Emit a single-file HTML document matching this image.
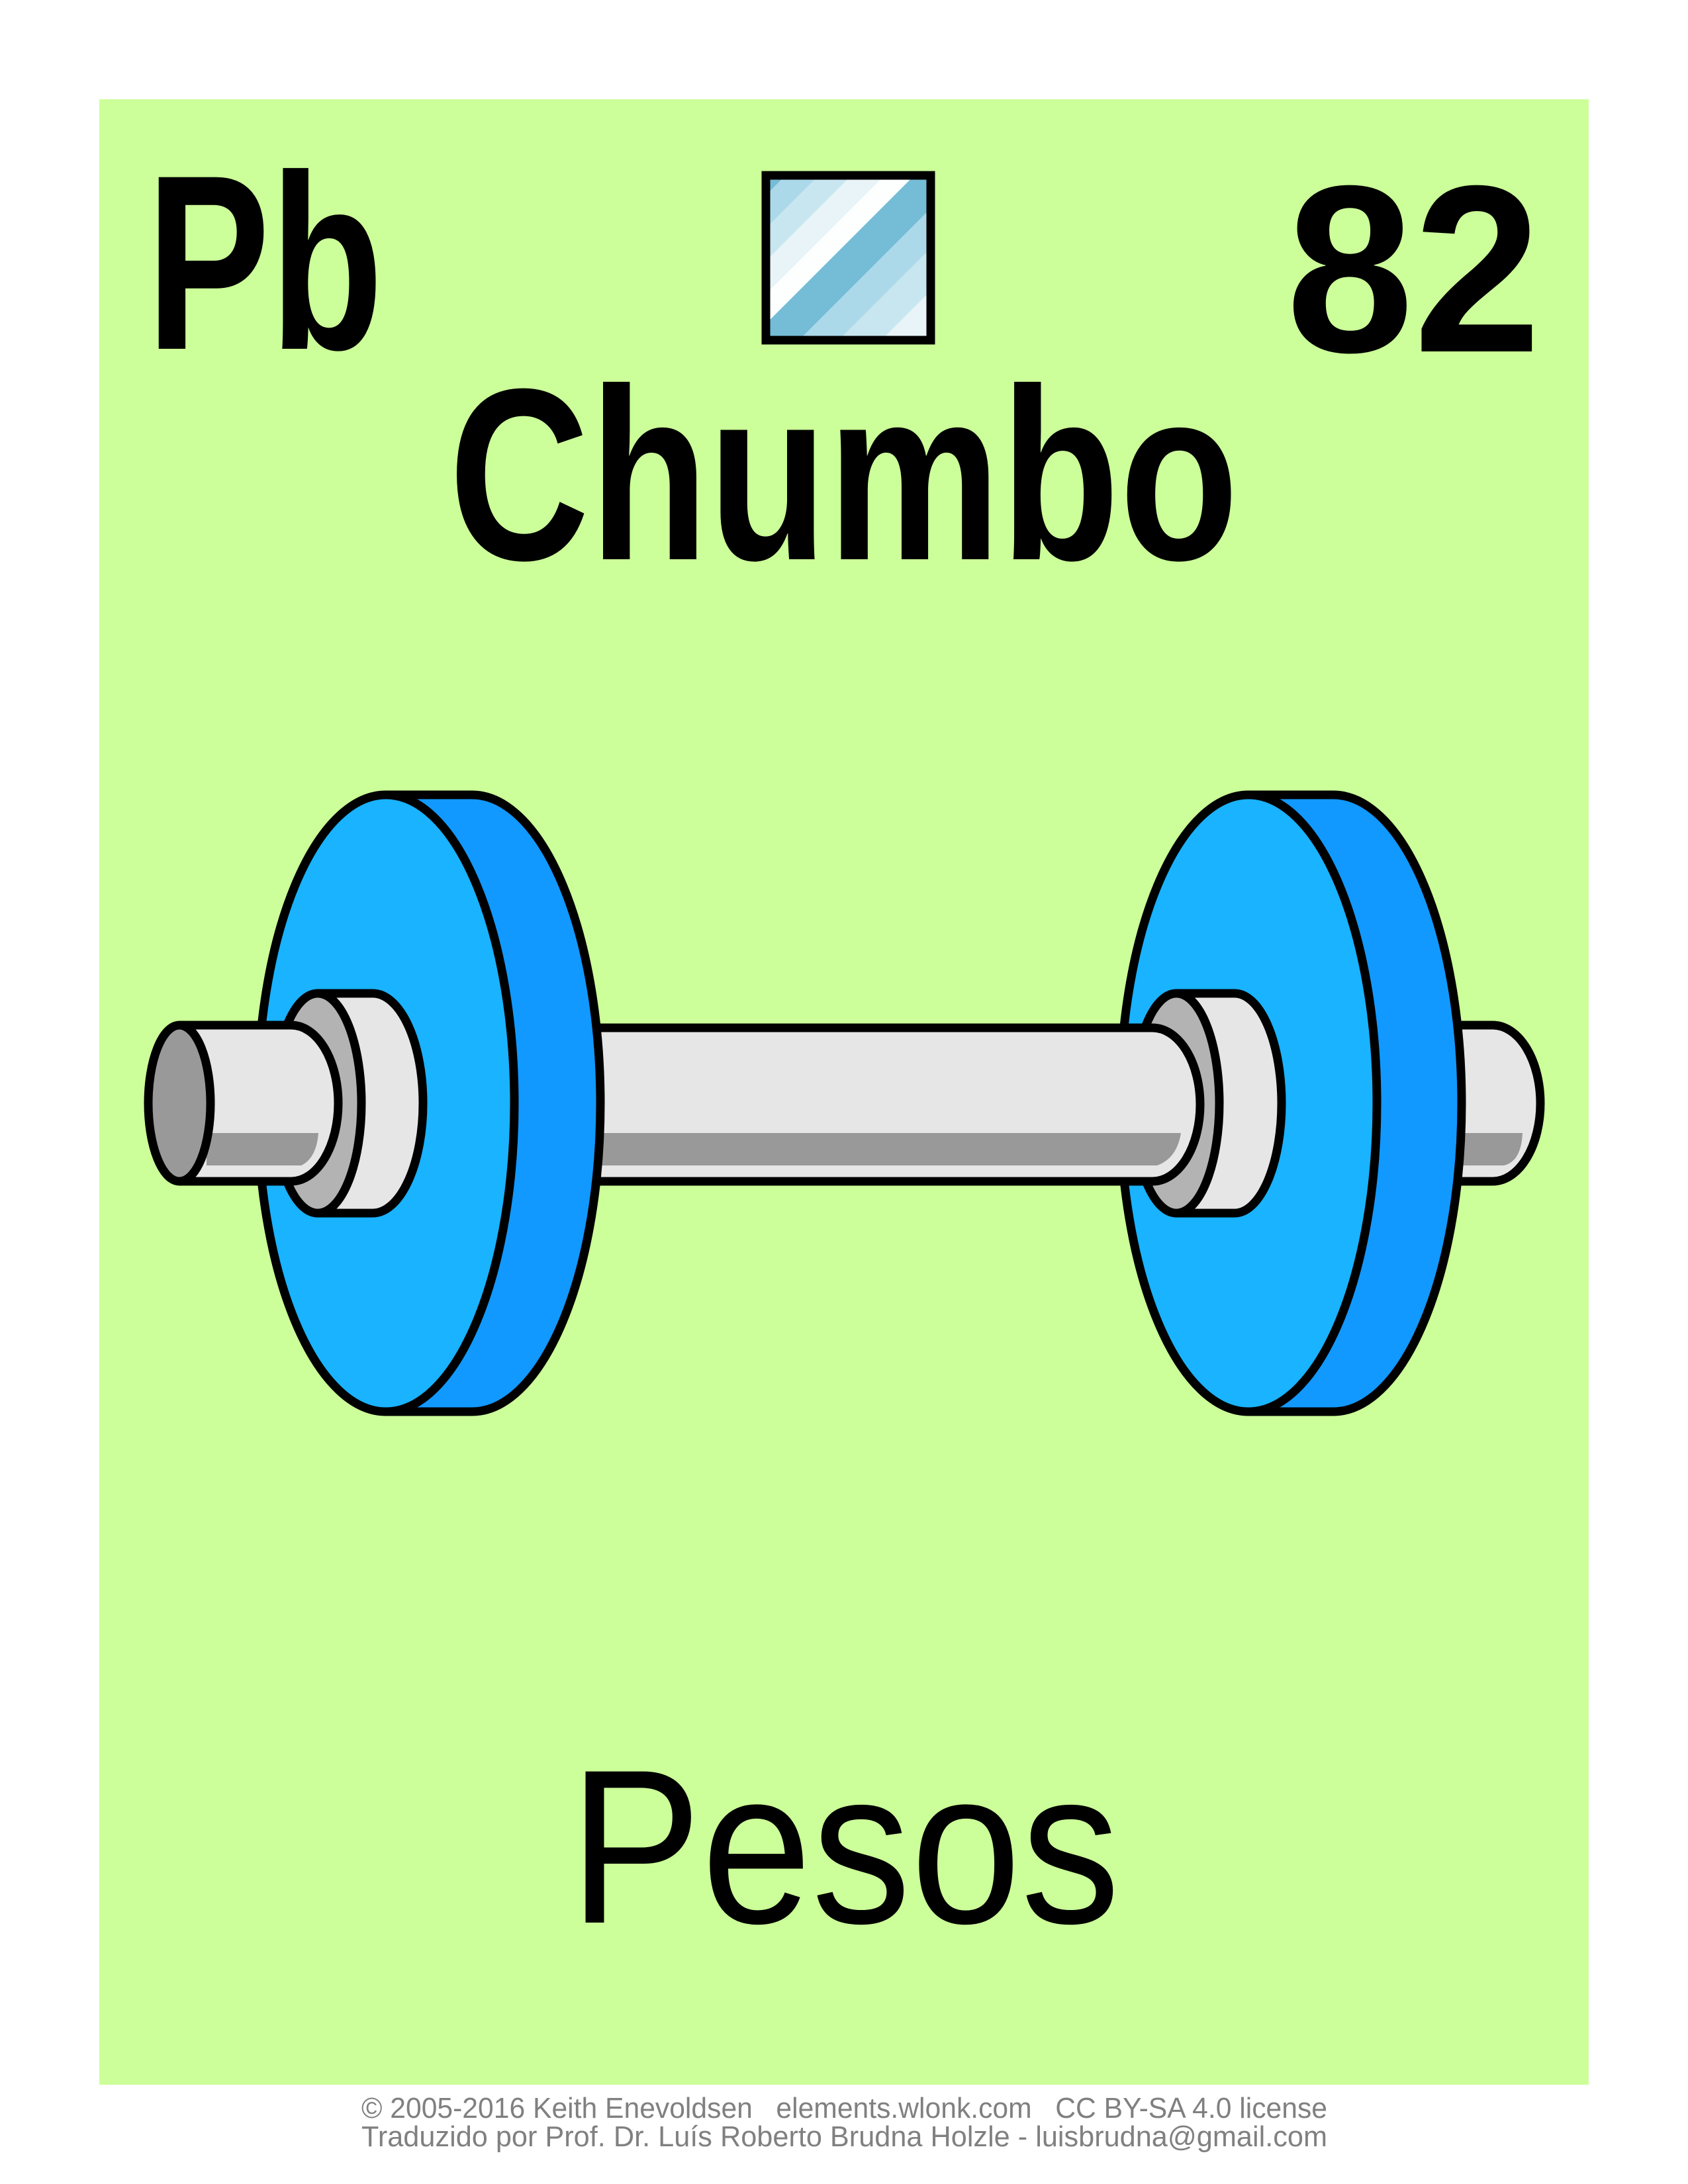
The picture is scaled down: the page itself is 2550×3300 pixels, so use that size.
<!DOCTYPE html>
<html><head><meta charset="utf-8"><style>
html,body{margin:0;padding:0;background:#fff;}
svg{display:block;}
</style></head><body>
<svg width="2550" height="3300" viewBox="0 0 2550 3300" xmlns="http://www.w3.org/2000/svg">
<defs>
<linearGradient id="g" x1="0" y1="0" x2="1" y2="1">
<stop offset="0" stop-color="#75bcd6"/><stop offset="0.06" stop-color="#75bcd6"/>
<stop offset="0.06" stop-color="#acd9ea"/><stop offset="0.16" stop-color="#acd9ea"/>
<stop offset="0.16" stop-color="#c8e6ef"/><stop offset="0.26" stop-color="#c8e6ef"/>
<stop offset="0.26" stop-color="#e8f4f7"/><stop offset="0.36" stop-color="#e8f4f7"/>
<stop offset="0.36" stop-color="#fdfefe"/><stop offset="0.45" stop-color="#fdfefe"/>
<stop offset="0.45" stop-color="#75bcd6"/><stop offset="0.6" stop-color="#75bcd6"/>
<stop offset="0.6" stop-color="#acd9ea"/><stop offset="0.72" stop-color="#acd9ea"/>
<stop offset="0.72" stop-color="#c8e6ef"/><stop offset="0.85" stop-color="#c8e6ef"/>
<stop offset="0.85" stop-color="#e8f4f7"/><stop offset="1" stop-color="#e8f4f7"/>
</linearGradient>
</defs>
<rect x="150" y="150" width="2250" height="3000" fill="#ccff99"/>
<text x="221" y="527" font-family="Liberation Sans, sans-serif" font-weight="bold" font-size="377" textLength="358" lengthAdjust="spacingAndGlyphs">Pb</text>
<text x="1943" y="531" font-family="Liberation Sans, sans-serif" font-weight="bold" font-size="360" textLength="385" lengthAdjust="spacingAndGlyphs">82</text>
<rect x="1157" y="265" width="249" height="249" fill="url(#g)" stroke="#000" stroke-width="13"/>
<text x="678" y="845" font-family="Liberation Sans, sans-serif" font-weight="bold" font-size="370" textLength="1193" lengthAdjust="spacingAndGlyphs">Chumbo</text>
<text x="860" y="2905" font-family="Liberation Sans, sans-serif" font-size="332" textLength="832" lengthAdjust="spacingAndGlyphs">Pesos</text>
<text x="546" y="3200" font-family="Liberation Sans, sans-serif" font-size="44" fill="#808080" textLength="1459" lengthAdjust="spacingAndGlyphs" xml:space="preserve">© 2005-2016 Keith Enevoldsen   elements.wlonk.com   CC BY-SA 4.0 license</text>
<text x="546" y="3243" font-family="Liberation Sans, sans-serif" font-size="44" fill="#808080" textLength="1459" lengthAdjust="spacingAndGlyphs">Traduzido por Prof. Dr. Luís Roberto Brudna Holzle - luisbrudna@gmail.com</text>

<g stroke="#000" stroke-width="13" stroke-linejoin="round">
<!-- main bar full (behind) -->
<path d="M800 1553 H1741 A72 116 0 0 1 1741 1785 H800 Z" fill="#e6e6e6"/>
<path d="M800 1712 H1784 Q1778 1750 1748 1761 H800 Z" fill="#999" stroke="none"/>
<!-- right stub (behind right plate) -->
<path d="M2150 1549 H2255 A72 118 0 0 1 2255 1785 H2150 Z" fill="#e6e6e6"/>
<path d="M2190 1712 H2300 Q2298 1755 2272 1761 H2190 Z" fill="#999" stroke="none"/>
<!-- left plate -->
<ellipse cx="713" cy="1667" rx="194" ry="466" fill="#1199ff"/>
<rect x="583" y="1201" width="130" height="932" fill="#1199ff" stroke="none"/>
<path d="M583 1201 H713 M583 2133 H713" fill="none"/>
<ellipse cx="583" cy="1667" rx="194" ry="466" fill="#19b3ff"/>
<!-- left collar -->
<path d="M480 1501 H563 A76 166 0 0 1 563 1833 H480 Z" fill="#e6e6e6"/>
<ellipse cx="480" cy="1667" rx="66" ry="166" fill="#b3b3b3"/>
<!-- left stub -->
<path d="M271 1549 H440 A71 118 0 0 1 440 1785 H271 Z" fill="#e6e6e6"/>
<path d="M312 1712 H481 Q478 1750 455 1761 H312 Z" fill="#999" stroke="none"/>
<ellipse cx="271" cy="1667" rx="47" ry="118" fill="#999"/>
<!-- right plate -->
<ellipse cx="2014" cy="1667" rx="194" ry="466" fill="#1199ff"/>
<rect x="1886" y="1201" width="128" height="932" fill="#1199ff" stroke="none"/>
<path d="M1886 1201 H2014 M1886 2133 H2014" fill="none"/>
<ellipse cx="1886" cy="1667" rx="194" ry="466" fill="#19b3ff"/>
<!-- right collar -->
<path d="M1777 1501 H1865 A71 166 0 0 1 1865 1833 H1777 Z" fill="#e6e6e6"/>
<ellipse cx="1777" cy="1667" rx="65" ry="166" fill="#b3b3b3"/>
<!-- main bar front end -->
<path d="M1600 1553 H1741 A72 116 0 0 1 1741 1785 H1600" fill="#e6e6e6"/>
<path d="M1600 1712 H1784 Q1778 1750 1748 1761 H1600 Z" fill="#999" stroke="none"/>
</g>
</svg>
</body></html>
